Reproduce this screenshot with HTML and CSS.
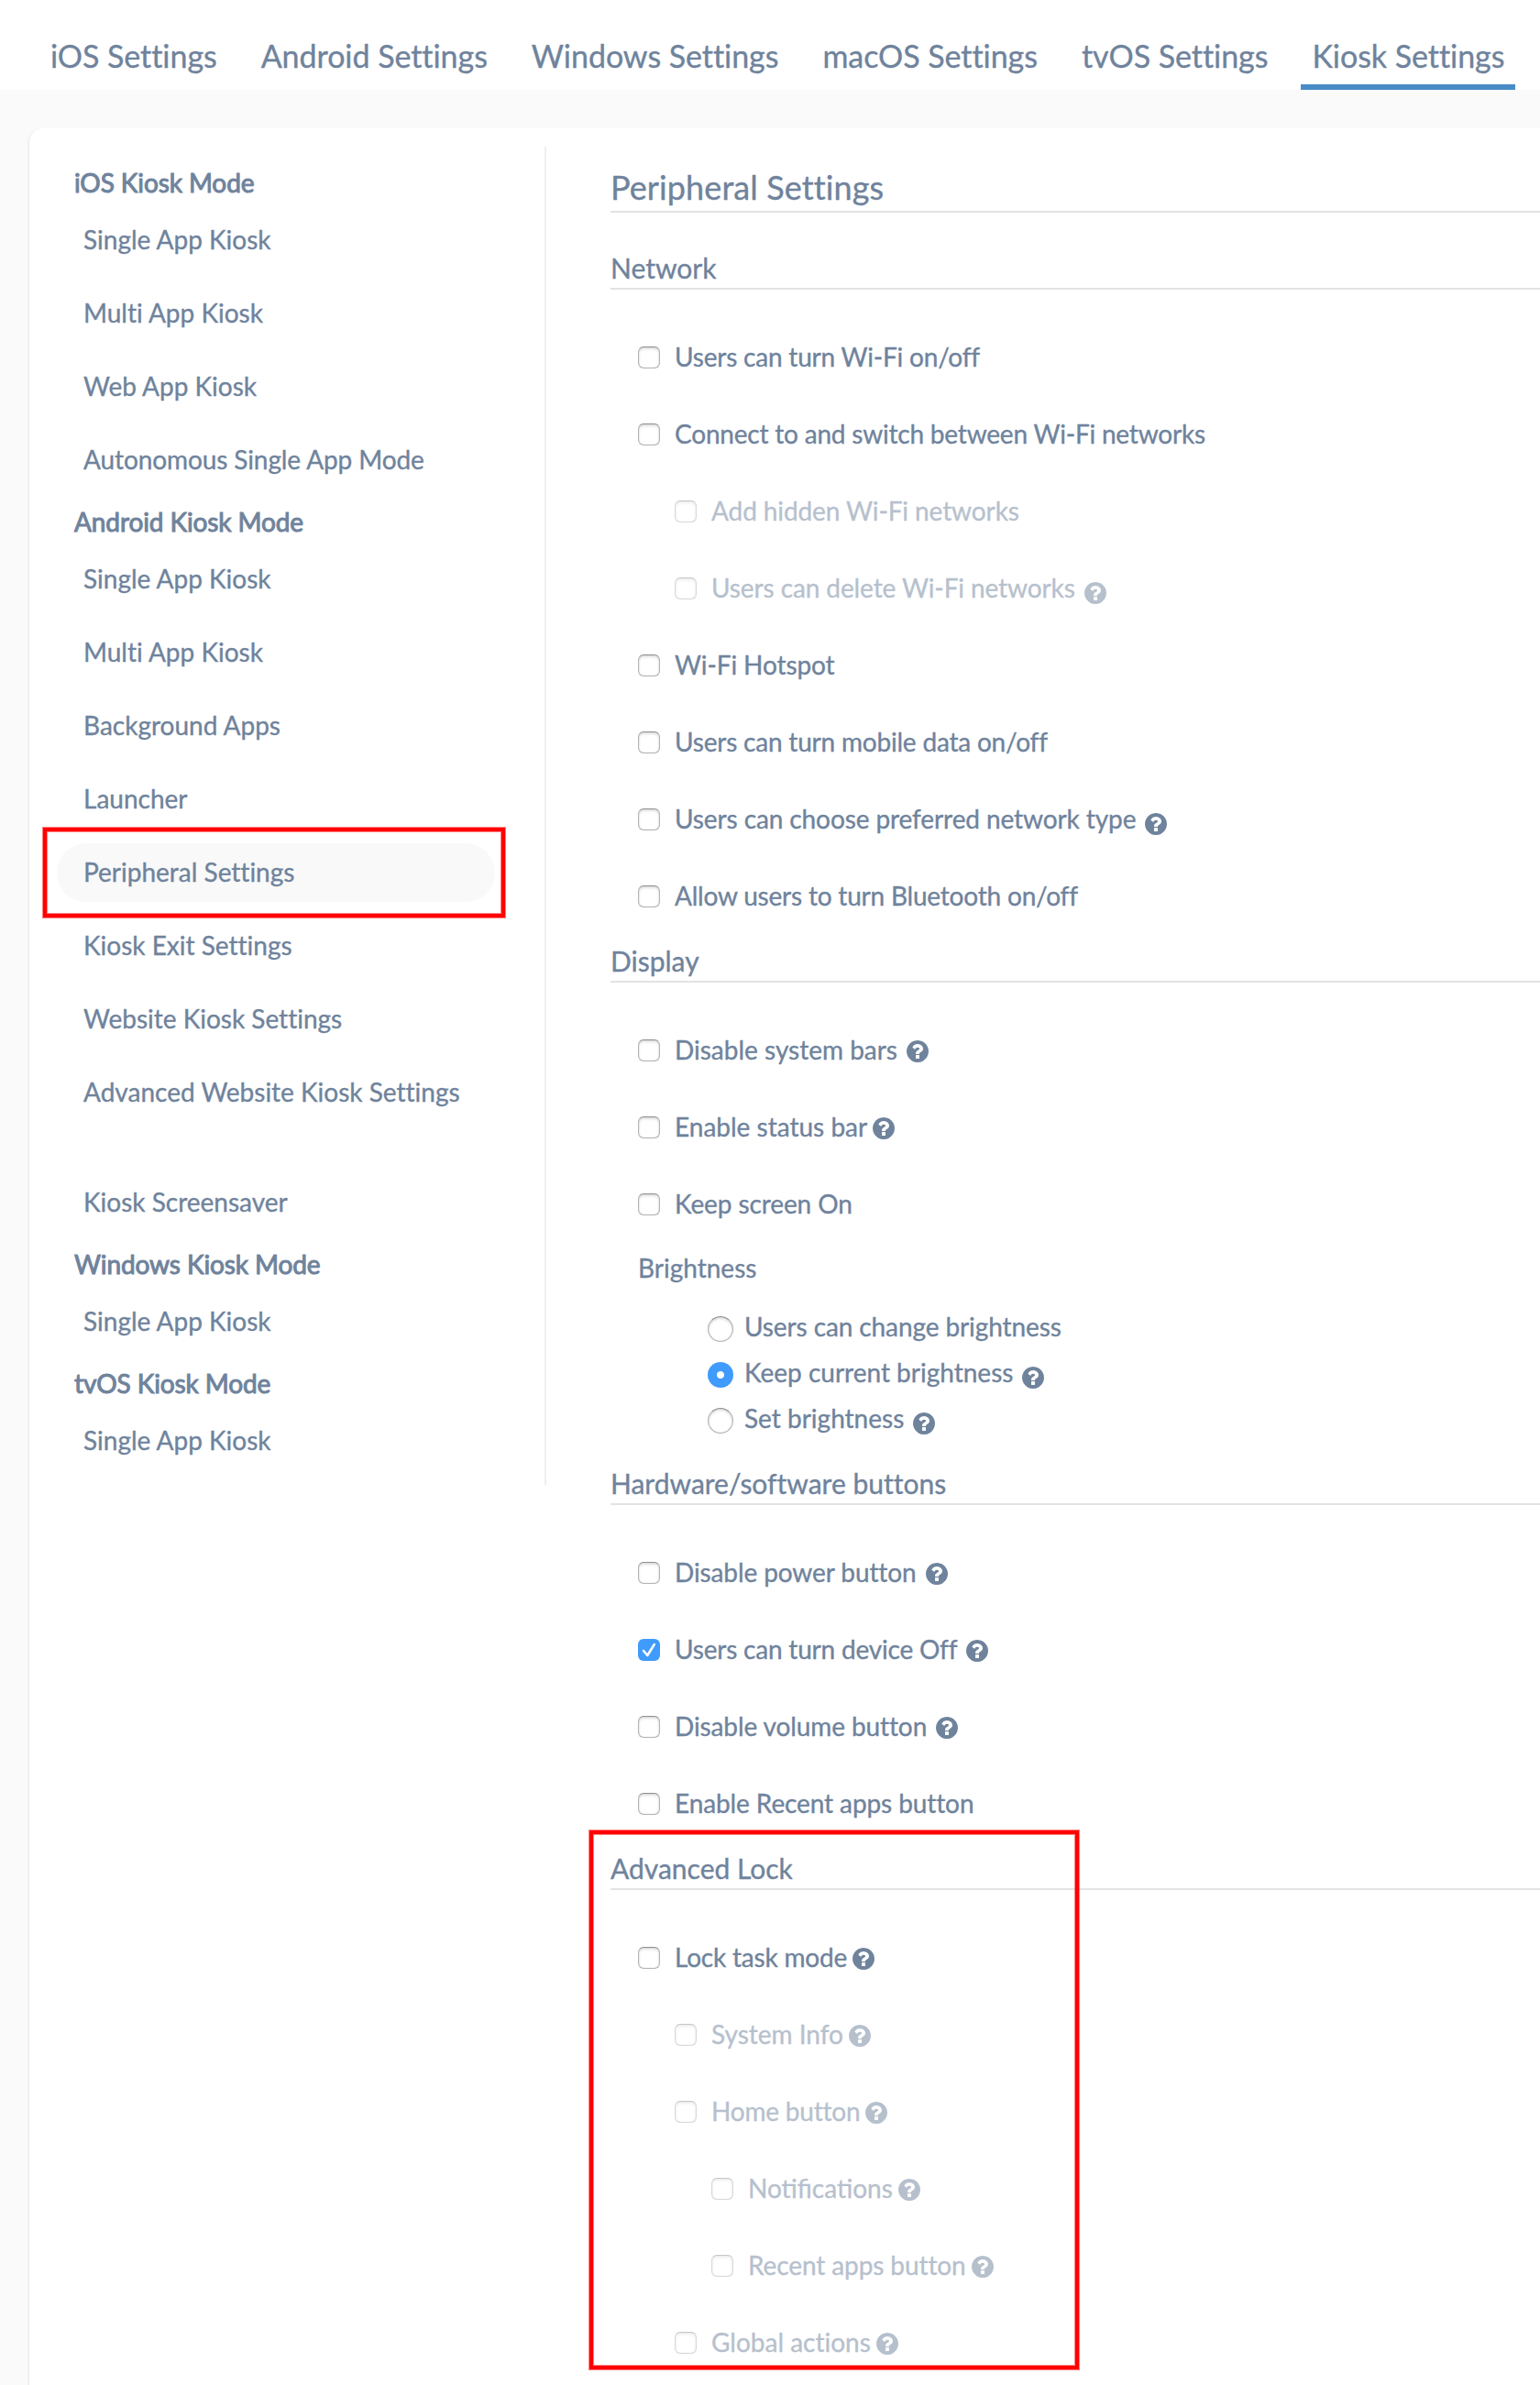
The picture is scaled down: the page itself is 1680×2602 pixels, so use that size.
FILE: index.html
```html
<!DOCTYPE html>
<html lang="en">
<head>
<meta charset="utf-8">
<title>Kiosk Settings</title>
<link rel="stylesheet" href="styles.css">
</head>
<body>
<svg class="sprite" aria-hidden="true">
  <symbol id="help" viewBox="128 128 1536 1536"><path d="M1024 1376v-192q0-14-9-23t-23-9h-192q-14 0-23 9t-9 23v192q0 14 9 23t23 9h192q14 0 23-9t9-23zm256-672q0-88-55.500-163t-138.500-116-170-41q-243 0-371 213-15 24 8 42l132 100q7 6 19 6 16 0 25-12 53-68 86-92 34-24 86-24 48 0 85.500 26t37.500 59q0 38-20 61t-68 45q-63 28-115.500 86.500t-52.500 125.500v36q0 14 9 23t23 9h192q14 0 23-9t9-23q0-19 21.500-49.500t54.500-49.500q32-18 49-28.500t46-35 44.500-48 28-60.500 12.500-81zm384 192q0 209-103 385.500t-279.500 279.500-385.500 103-385.500-103-279.500-279.500-103-385.500 103-385.500 279.500-279.500 385.500-103 385.500 103 279.500 279.500 103 385.500z"/></symbol>
</svg>
<header class="tabs">
  <a class="tab">iOS Settings</a>
  <a class="tab">Android Settings</a>
  <a class="tab">Windows Settings</a>
  <a class="tab">macOS Settings</a>
  <a class="tab">tvOS Settings</a>
  <a class="tab active">Kiosk Settings</a>
</header>
<div class="card">
  <nav class="side">
    <h4>iOS Kiosk Mode</h4>
    <a class="item">Single App Kiosk</a>
    <a class="item">Multi App Kiosk</a>
    <a class="item">Web App Kiosk</a>
    <a class="item snug">Autonomous Single App Mode</a>
    <h4>Android Kiosk Mode</h4>
    <a class="item">Single App Kiosk</a>
    <a class="item">Multi App Kiosk</a>
    <a class="item">Background Apps</a>
    <a class="item">Launcher</a>
    <a class="item current">Peripheral Settings<span class="callout callout-nav"></span></a>
    <a class="item">Kiosk Exit Settings</a>
    <a class="item">Website Kiosk Settings</a>
    <a class="item tall">Advanced Website Kiosk Settings</a>
    <a class="item">Kiosk Screensaver</a>
    <h4>Windows Kiosk Mode</h4>
    <a class="item">Single App Kiosk</a>
    <h4>tvOS Kiosk Mode</h4>
    <a class="item">Single App Kiosk</a>
  </nav>
  <main class="content">
    <h1>Peripheral Settings</h1>
    <section>
      <h2>Network</h2>
      <div class="rows">
        <label class="row"><input type="checkbox"><span class="tight">Users can turn Wi-Fi on/off</span></label>
        <label class="row"><input type="checkbox"><span class="tight">Connect to and switch between Wi-Fi networks</span></label>
        <label class="row sub off"><input type="checkbox" disabled><span class="snug">Add hidden Wi-Fi networks</span></label>
        <label class="row sub off"><input type="checkbox" disabled><span class="snug">Users can delete Wi-Fi networks</span><svg class="help wide low"><use href="#help"/></svg></label>
        <label class="row"><input type="checkbox"><span class="snug">Wi-Fi Hotspot</span></label>
        <label class="row"><input type="checkbox"><span class="tight">Users can turn mobile data on/off</span></label>
        <label class="row"><input type="checkbox"><span class="snug">Users can choose preferred network type</span><svg class="help wide low"><use href="#help"/></svg></label>
        <label class="row"><input type="checkbox"><span class="tight">Allow users to turn Bluetooth on/off</span></label>
      </div>
    </section>
    <section>
      <h2>Display</h2>
      <div class="rows">
        <label class="row"><input type="checkbox"><span>Disable system bars</span><svg class="help wide"><use href="#help"/></svg></label>
        <label class="row"><input type="checkbox"><span>Enable status bar</span><svg class="help"><use href="#help"/></svg></label>
        <label class="row"><input type="checkbox"><span class="snug">Keep screen On</span></label>
      </div>
      <div class="brightness">
        <h3>Brightness</h3>
        <label class="choice"><input type="radio" name="b"><span class="snug">Users can change brightness</span></label>
        <label class="choice"><input type="radio" name="b" checked><span>Keep current brightness</span><svg class="help wide low"><use href="#help"/></svg></label>
        <label class="choice"><input type="radio" name="b"><span>Set brightness</span><svg class="help wide low"><use href="#help"/></svg></label>
      </div>
    </section>
    <section>
      <h2>Hardware/software buttons</h2>
      <div class="rows">
        <label class="row"><input type="checkbox"><span class="snug">Disable power button</span><svg class="help wide"><use href="#help"/></svg></label>
        <label class="row"><span class="checked"><svg viewBox="0 0 24 24"><path d="M6 13l4.300 5L17.800 6"/></svg></span><span class="tight">Users can turn device Off</span><svg class="help wide"><use href="#help"/></svg></label>
        <label class="row"><input type="checkbox"><span class="snug">Disable volume button</span><svg class="help wide"><use href="#help"/></svg></label>
        <label class="row"><input type="checkbox"><span class="snug">Enable Recent apps button</span></label>
      </div>
    </section>
    <section class="lock">
      <h2>Advanced Lock</h2>
      <div class="rows">
        <label class="row"><input type="checkbox"><span class="tight">Lock task mode</span><svg class="help"><use href="#help"/></svg></label>
        <label class="row sub off"><input type="checkbox" disabled><span>System Info</span><svg class="help"><use href="#help"/></svg></label>
        <label class="row sub off"><input type="checkbox" disabled><span class="tight">Home button</span><svg class="help"><use href="#help"/></svg></label>
        <label class="row sub2 off"><input type="checkbox" disabled><span class="joined">Notifications</span><svg class="help"><use href="#help"/></svg></label>
        <label class="row sub2 off"><input type="checkbox" disabled><span class="snug">Recent apps button</span><svg class="help"><use href="#help"/></svg></label>
        <label class="row sub off"><input type="checkbox" disabled><span>Global actions</span><svg class="help"><use href="#help"/></svg></label>
      </div>
      <span class="callout callout-lock"></span>
    </section>
  </main>
</div>
</body>
</html>
```
FILE: styles.css
```css
* { box-sizing: border-box; }

body {
  margin: 0;
  height: 2602px;
  overflow: hidden;
  background: #fafafa;
  color: #6f839c;
  font: 28px/34px Lato, "Liberation Sans", sans-serif;
  font-variant-ligatures: none;
  -webkit-text-stroke: .35px #6f839c;
  white-space: nowrap;
}

h1, h2, h3, h4 { margin: 0; font-weight: 400; }

.sprite { display: none; }

/* Top tabs */
.tabs {
  display: flex;
  gap: 24px;
  height: 98px;
  padding-left: 43px;
  background: #fff;
  font-size: 34px;
  letter-spacing: -.05px;
}
.tab {
  height: 98px;
  padding: 0 12px;
  line-height: 122px;
}
.tab.active { border-bottom: 6px solid #478cc7; }

/* Card */
.card {
  display: flex;
  height: 2500px;
  margin: 42px 0 0 30px;
  padding-top: 20px;
  border-left: 2px solid #f0f0f0;
  border-top-left-radius: 16px;
  background: #fff;
}

/* Side navigation */
.side {
  width: 564px;
  height: 1460px;
  padding: 12px 54px 0 30px;
  border-right: 2px solid #eee;
}
.side h4 {
  height: 50px;
  padding-left: 19px;
  letter-spacing: -.1px;
  -webkit-text-stroke: 1px #6f839c;
  line-height: 54px;
}
.item {
  position: relative;
  display: block;
  height: 64px;
  margin: 0 0 16px;
  padding-left: 29px;
  border-radius: 32px;
  line-height: 63px;
}
.side h4 + .item { margin-top: 8px; }
.side .item:has(+ h4) { margin-bottom: 8px; }
.item.tall { margin-bottom: 56px; }
.item.current { background: #f9f9f9; }

/* Content */
.content { flex: 1; padding-left: 70px; }
h1 {
  height: 72px;
  border-bottom: 2px solid #e3e3e3;
  font-size: 36px;
  line-height: 88px;
  letter-spacing: .1px;
  margin-bottom: 32px;
}
h2 {
  height: 52px;
  border-bottom: 2px solid #e3e3e3;
  font-size: 30px;
  line-height: 56px;
}
.rows { padding: 32px 0 0 30px; }
.row {
  display: flex;
  align-items: center;
  height: 84px;
}
.row > input + span, .row > .checked + span { margin-top: -2px; }
.row.sub { padding-left: 40px; }
.row.sub2 { padding-left: 80px; }
.off { opacity: .5; }
.snug { letter-spacing: -.1px; }
.tight { letter-spacing: -.2px; }
.joined { font-variant-ligatures: normal; }

input {
  appearance: none;
  flex: none;
  margin: 0;
  border: 1px solid #b4b4b4;
  border-top-color: #8f8f8f;
  background: #fff;
  box-shadow: inset 0 2px 3px rgba(0, 0, 0, .12), inset 0 0 1px rgba(0, 0, 0, .3);
}
input[type="checkbox"] { width: 24px; height: 24px; margin-right: 16px; border-radius: 6px; }
input[type="radio"] { width: 28px; height: 28px; margin-right: 12px; border-radius: 50%; }
input[type="radio"]:checked {
  border: 0;
  background: radial-gradient(circle, #fff 0 3.5px, #3f9bfc 4.5px);
  box-shadow: none;
}
.checked {
  width: 24px;
  height: 24px;
  margin-right: 16px;
  border-radius: 6px;
  background: #3f9bfc;
}
.checked svg { display: block; width: 24px; height: 24px; fill: none; stroke: #fff; stroke-width: 2.600; stroke-linecap: round; stroke-linejoin: round; }

.help { width: 24px; height: 24px; margin: 2px 0 0 6px; fill: #6f839c; }
.help.wide { margin-left: 10px; }
.help.low { margin-top: 10px; }

.brightness { padding: 0 0 15px 30px; }
.brightness h3 { height: 69px; font-size: 28px; line-height: 55px; }
.choice { display: flex; align-items: center; height: 50px; padding-left: 76px; }
.choice span { margin-top: -6px; }
.choice .help.low { margin-top: 6px; }

/* Highlight frames */
.callout {
  position: absolute;
  border: 4px solid #f00;
  box-shadow: 0 0 0 1px rgba(255, 0, 0, .5), inset 0 0 0 1px rgba(255, 0, 0, .5);
}
.callout-nav { left: -15px; top: -17px; width: 504px; height: 98px; }
.lock { position: relative; }
.callout-lock { left: -23px; top: -13px; width: 534px; height: 588px; }
```
